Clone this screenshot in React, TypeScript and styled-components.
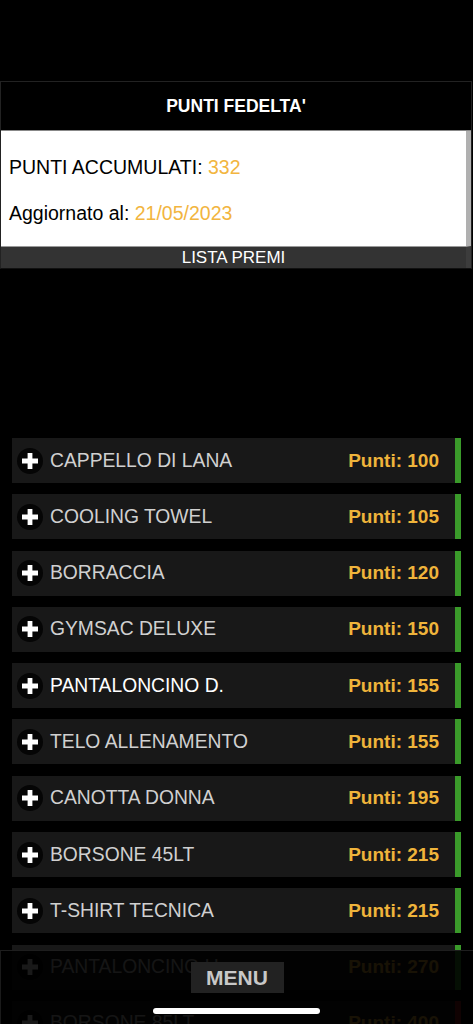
import React from 'react';
import styled, { createGlobalStyle } from 'styled-components';

type Premio = { name: string; punti: number; ok: boolean; bright?: boolean };

const premi: Premio[] = [
  { name: 'CAPPELLO DI LANA', punti: 100, ok: true },
  { name: 'COOLING TOWEL', punti: 105, ok: true },
  { name: 'BORRACCIA', punti: 120, ok: true },
  { name: 'GYMSAC DELUXE', punti: 150, ok: true },
  { name: 'PANTALONCINO D.', punti: 155, ok: true, bright: true },
  { name: 'TELO ALLENAMENTO', punti: 155, ok: true },
  { name: 'CANOTTA DONNA', punti: 195, ok: true },
  { name: 'BORSONE 45LT', punti: 215, ok: true },
  { name: 'T-SHIRT TECNICA', punti: 215, ok: true },
  { name: 'PANTALONCINO U.', punti: 270, ok: true },
  { name: 'BORSONE 85LT', punti: 400, ok: false },
];

export default function App(): React.ReactElement {
  return (
    <>
      <GlobalStyle />
      <Page>
        <Panel>
          <PanelTitle>PUNTI FEDELTA'</PanelTitle>
          <PanelBody>
            <InfoLine>
              PUNTI ACCUMULATI: <Value>332</Value>
            </InfoLine>
            <InfoLine>
              Aggiornato al: <Value>21/05/2023</Value>
            </InfoLine>
          </PanelBody>
          <ListaBar>LISTA PREMI</ListaBar>
        </Panel>

        <List>
          {premi.map((p) => (
            <Row key={p.name}>
              <PlusIcon>
                <svg width="16" height="16" viewBox="0 0 16 16">
                  <path d="M5.6 0h4.8v5.6H16v4.8h-5.6V16H5.6v-5.6H0V5.6h5.6z" fill="#fff" />
                </svg>
              </PlusIcon>
              <Name $bright={p.bright}>{p.name}</Name>
              <Punti>Punti: {p.punti}</Punti>
              <StatusBar $ok={p.ok} />
            </Row>
          ))}
        </List>
      </Page>

      <BottomBar>
        <MenuButton>MENU</MenuButton>
      </BottomBar>
      <HomeIndicator />
    </>
  );
}

const GlobalStyle = createGlobalStyle`
  html, body {
    margin: 0;
    padding: 0;
    background: #000;
    overflow: hidden;
  }
  body {
    font-family: 'Liberation Sans', Arial, sans-serif;
  }
`;

const Page = styled.div`
  display: flex;
  flex-direction: column;
  width: 473px;
  height: 1024px;
  padding-top: 81px;
  box-sizing: border-box;
  background: #000;
`;

const Panel = styled.div`
  width: 472px;
  border: 1px solid #222;
  border-bottom-color: #111;
  box-sizing: border-box;
  display: flex;
  flex-direction: column;
`;

const PanelTitle = styled.div`
  height: 48px;
  display: flex;
  align-items: center;
  justify-content: center;
  color: #fff;
  font-size: 17.5px;
  font-weight: bold;
  background: #000;
  border-bottom: 1px solid #888;
`;

const PanelBody = styled.div`
  height: 115px;
  box-sizing: border-box;
  padding: 13px 8px 10px;
  background: #fff;
  border-right: 5px solid #b0b0b0;
`;

const InfoLine = styled.div`
  height: 46px;
  line-height: 46px;
  font-size: 19.5px;
  color: #000;
  white-space: nowrap;
`;

const Value = styled.span`
  color: #f2b540;
`;

const ListaBar = styled.div`
  height: 21px;
  line-height: 22px;
  text-align: center;
  background: #333;
  color: #fff;
  font-size: 17px;
  border-top: 1px solid #999;
  border-right: 5px solid #3c3c3c;
`;

const List = styled.div`
  display: flex;
  flex-direction: column;
  gap: 11.3px;
  margin-top: 169px;
  padding-left: 12px;
`;

const Row = styled.div`
  display: flex;
  align-items: center;
  width: 449px;
  height: 45px;
  background: #181818;
  padding-left: 5px;
  box-sizing: border-box;
`;

const PlusIcon = styled.div`
  width: 26px;
  height: 26px;
  border-radius: 50%;
  background: #050505;
  display: flex;
  align-items: center;
  justify-content: center;
  flex-shrink: 0;
`;

const Name = styled.div<{ $bright?: boolean }>`
  flex: 1;
  margin-left: 7px;
  font-size: 19.3px;
  color: ${(p) => (p.$bright ? '#fff' : '#d0d0d0')};
  white-space: nowrap;
`;

const Punti = styled.div`
  font-size: 19px;
  font-weight: bold;
  color: #efb43b;
  margin-right: 16px;
`;

const StatusBar = styled.div<{ $ok: boolean }>`
  align-self: stretch;
  width: 6px;
  background: ${(p) => (p.$ok ? '#3a9a2a' : '#a01818')};
`;

const BottomBar = styled.div`
  position: fixed;
  left: 0;
  right: 0;
  bottom: 0;
  height: 74px;
  background: rgba(0, 0, 0, 0.9);
  border-top: 1px solid #1e1e1e;
  border-left: 1px solid #1a1a1a;
  display: flex;
  justify-content: center;
  align-items: flex-start;
  padding-top: 11px;
  box-sizing: border-box;
`;

const MenuButton = styled.div`
  width: 93px;
  height: 31px;
  display: flex;
  align-items: center;
  justify-content: center;
  background: #222;
  color: #c8c8c8;
  font-size: 21px;
  font-weight: bold;
`;

const HomeIndicator = styled.div`
  position: fixed;
  left: 153px;
  bottom: 10px;
  width: 167px;
  height: 6px;
  border-radius: 3px;
  background: #fff;
`;
